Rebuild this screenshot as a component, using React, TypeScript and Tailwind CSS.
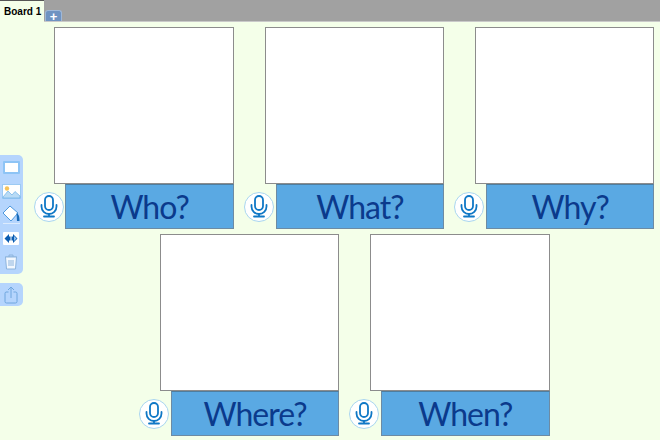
const filas = [
  { pad: "pl-[54.3px]", titulos: ["Who?", "What?", "Why?"] },
  { pad: "pl-[159.8px]", titulos: ["Where?", "When?"] },
];

function Mic() {
  return (
    <div className="w-[30px] h-[30px] shrink-0 rounded-full bg-white border border-[#a9d6ef] flex items-center justify-center">
      <svg width="20" height="23" viewBox="0 0 20 23" fill="none" stroke="#0f78c6" strokeWidth="1.8" strokeLinecap="round">
        <rect x="6" y="1" width="8" height="14" rx="4" />
        <path d="M2.5 10v1.5a7.5 7.5 0 0 0 15 0V10" />
        <path d="M10 19v2.5M5 21.5h10" />
      </svg>
    </div>
  );
}

function Card({ titulo }: { titulo: string }) {
  return (
    <div className="w-[179.5px]">
      <div className="h-[157px] bg-white border border-[#8c8c8c]" />
      <div className="flex items-center">
        <div className="-ml-[20.8px] mr-[1.8px]">
          <Mic />
        </div>
        <div className="flex-1 h-[45px] bg-[#5aa9e3] border border-[#6d8ba3] border-t-[#4f7d9e] flex items-center justify-center text-[32px] leading-none text-[#0b3a8c] font-['Lato',sans-serif] tracking-[-1px]">
          {titulo}
        </div>
      </div>
    </div>
  );
}

function Toolbar() {
  return (
    <div className="absolute left-0 top-[155px] flex flex-col gap-[9px]">
      <div className="w-[23px] h-[119px] bg-[#b5d5fd] rounded-r-[5px] flex flex-col items-center pt-[6px] pr-[1px]">
        <div className="w-[17px] h-[13px] bg-white border-2 border-[#8ec4f5] rounded-[1px]" />
        <svg className="mt-[10px]" width="19" height="15" viewBox="0 0 19 15">
          <rect x="0.5" y="0.5" width="18" height="14" fill="#fff" stroke="#9ccaf3" />
          <circle cx="5" cy="4.5" r="2.2" fill="#f5c35b" />
          <path d="M1 13l5-6 4 4 3-3.5 5 4.5v2H1z" fill="#b9dbf6" stroke="#6fb0e6" strokeWidth="0.7" />
        </svg>
        <svg className="mt-[6px]" width="19" height="17" viewBox="0 0 19 17">
          <path d="M8 1l8 7-7 8-8-8z" fill="#fff" stroke="#4d98dd" />
          <path d="M14.5 8c2 1 3 3 3 8h-2.5z" fill="#1a6cba" />
        </svg>
        <div className="mt-px w-[17px] h-px bg-[#dcebfd]" />
        <div className="mt-[8px] w-[16px] h-[13px] bg-white rounded-[1px] flex items-center justify-center">
          <svg width="14" height="9" viewBox="0 0 14 9">
            <path d="M0.5 4.5L5 0v2.5h1.5v4H5V9z" fill="#0b5cb0" />
            <path d="M7.5 2.5H9V0l4.5 4.5L9 9V6.5H7.5z" fill="#0b5cb0" />
            <path d="M10 2l2.5 2.5L10 7z" fill="#8fc0f0" />
          </svg>
        </div>
        <svg className="mt-[9px]" width="14" height="16" viewBox="0 0 14 16" fill="#f2f8ff" stroke="#8db4dc" strokeWidth="1">
          <path d="M1 3h12M5 3V1h4v2" fill="none" />
          <path d="M1.5 3l1 12h9l1-12z" />
          <path d="M5 6v6M7 6v6M9 6v6" />
        </svg>
      </div>
      <div className="w-[23px] h-[23px] bg-[#b5d5fd] rounded-r-[5px] flex items-center justify-center pr-[1px]">
        <svg width="14" height="18" viewBox="0 0 14 18" fill="none" stroke="#6ea6de" strokeWidth="1">
          <path d="M4.5 6H2a1.5 1.5 0 0 0-1 1.5v8A1.5 1.5 0 0 0 2.5 17h9a1.5 1.5 0 0 0 1.5-1.5v-8A1.5 1.5 0 0 0 11.5 6H9.5" />
          <path d="M7 12V1M4 4l3-3 3 3" />
        </svg>
      </div>
    </div>
  );
}

export default function App() {
  return (
    <main className="relative w-[660px] h-[440px] overflow-hidden bg-[#f4ffe9] font-['Liberation_Sans',sans-serif]">
      <div className="flex h-[22px]">
        <div className="w-[44px] pl-[4px] pt-[4px] text-[10px] font-bold leading-[14px] text-black whitespace-nowrap border-t border-[#555]">
          Board 1
        </div>
        <div className="flex-1 bg-[#a1a1a1] flex items-end pl-[1px] border-b border-[#c9c9c9]">
          <div className="w-[17px] h-[11px] bg-[#6f93c2] border border-[#9fb8d8] border-b-0 rounded-t-[3px] flex items-center justify-center text-white text-[13px] font-bold leading-none">
            +
          </div>
        </div>
      </div>

      <div className="pt-[5px] flex flex-col gap-[5px]">
        {filas.map((fila) => (
          <div key={fila.pad} className={`flex gap-[30.8px] ${fila.pad}`}>
            {fila.titulos.map((t) => (
              <Card key={t} titulo={t} />
            ))}
          </div>
        ))}
      </div>

      <Toolbar />
    </main>
  );
}
